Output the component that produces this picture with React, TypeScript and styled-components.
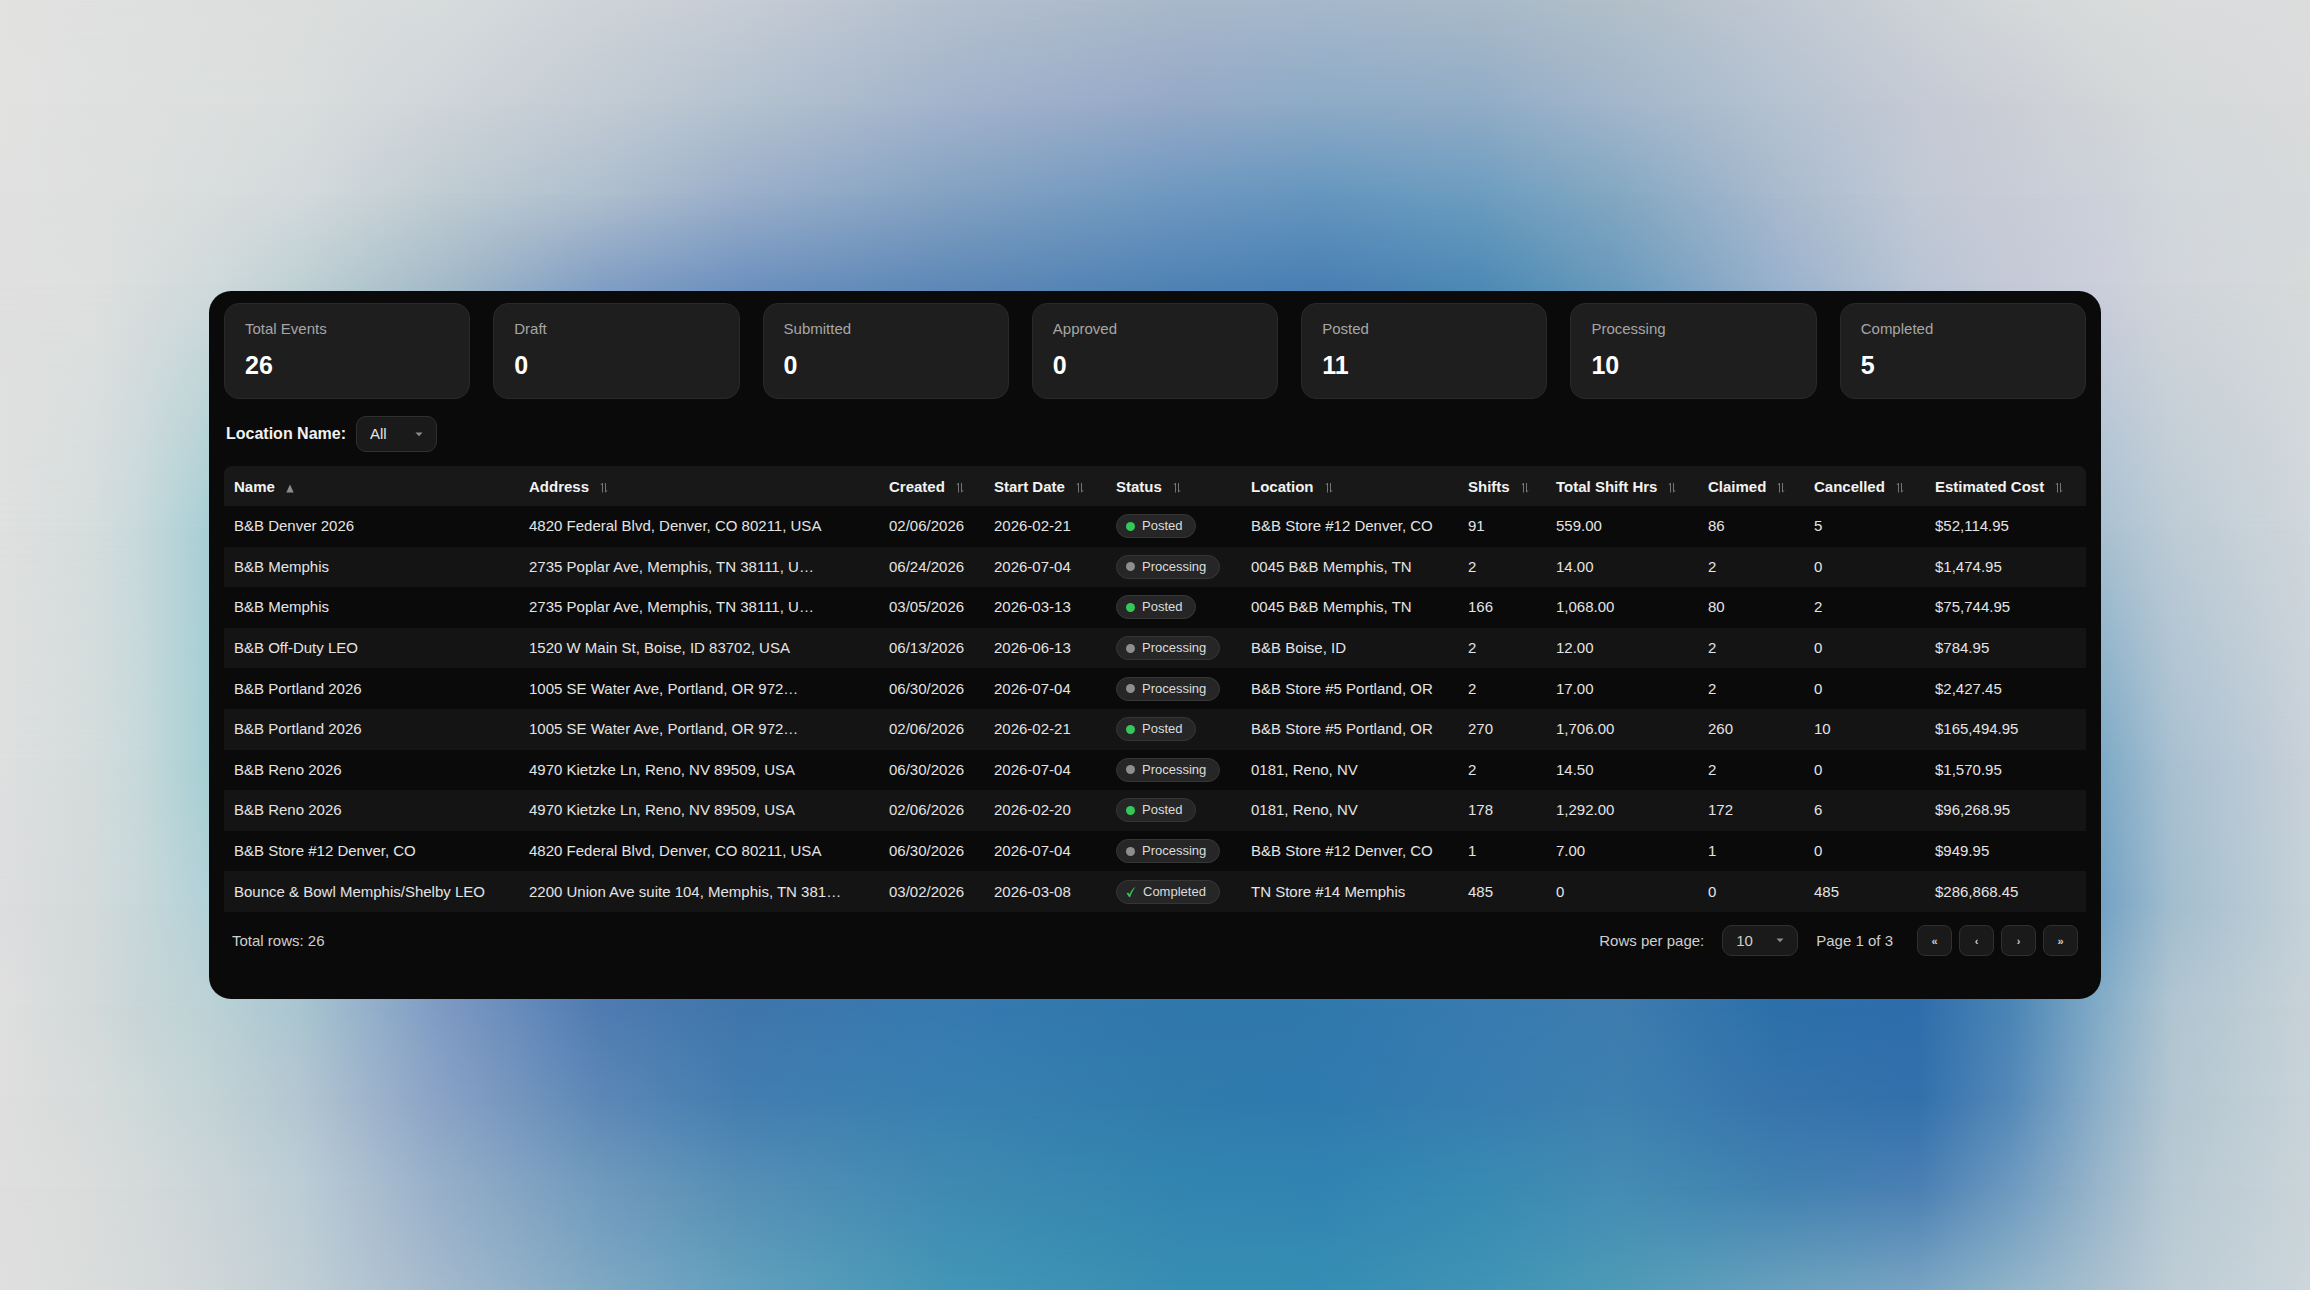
import React from "react";
import styled, { createGlobalStyle } from "styled-components";

const GlobalStyle = createGlobalStyle`
  *, *::before, *::after { box-sizing: border-box; }
  body {
    margin: 0;
    background: #d8dcdd;
    color: #e4e4e4;
    font-family: "Liberation Sans", Arial, sans-serif;
    font-size: 15px;
    line-height: 20px;
  }
  button, select { font: inherit; color: inherit; }
`;

/* Backdrop: horizontal colour bands, each fading into the next one below it. */

const STOPS = [0, 4, 6, 9, 13, 19, 26, 32, 41, 51, 57, 64, 70, 77, 83, 87, 91, 94, 100];

const BANDS: { at: number; colors: string }[] = [
  { at: 0, colors: "e2e2e1 e0e1e0 dfe1e0 dddfde dcdedd d8dcdd ced3d8 c7cdd6 b4c0cd a9b8ca a6b8cc a9bac8 b2bfc8 c0c8d3 cdd2d7 d4d8d9 d9dcdc dbdcdd dcdddd" },
  { at: 8, colors: "e2e2e1 dfe1e0 dee0df dcdfde dadddd cfd5d9 c2cbd4 b4c2cf a3b3cc 95a9c7 8eabc6 91acc6 a2b6cb b5c2d0 c4cad5 ccced6 d2d5d7 d6d9da dadbdc" },
  { at: 15, colors: "e1e1e1 dee0df dcdfde d9dddd d3dadc c0ccd3 afbfce 9bafca 84a2c2 6f98c0 6696be 6d9dc0 84a8c2 a9bace c1c9d5 c8ccd7 ccd1da d2d7db d7dadb" },
  { at: 22, colors: "e0e0e0 dee0df d9dddd d0dadb bfd0d4 a5bbc8 839fc4 6f92bf 5f89b7 5083b4 4a80b4 4d8ab4 6a9abc 99b1cc b9c4d3 c4c9d7 cccedb d1d5da d7dada" },
  { at: 41, colors: "dfe0df d5dddd c8d9dc a8cfd5 8abfcf 6aa5c4 4f8abb 437fb4 3f7cb2 3c7cb0 3b7cb0 3f7fb2 4b88b6 6a9abc 88adc4 9ab9cb a9c1d2 bdcbd5 d0d7dc" },
  { at: 59, colors: "dedfdf d4dcdc c8d9db a6cfd3 8dbfce 6b9cc3 4f80b8 437ab2 3a79b0 3578ae 3478ae 3a7ab0 3f7fb2 3f7cb0 4a82b3 6297bd 7eaac6 a8c0d1 c9d1d9" },
  { at: 70, colors: "dddddf d3dada c8d8da b2d1d8 9cc2d0 7499c4 4c78b4 3f76ae 3678b0 3078ad 3078ad 377ab0 3c7cae 3073ac 336fac 4c86b6 74a2c4 a2bdce c6d2d9" },
  { at: 78, colors: "dfdfdf d2dad9 c8d5d7 bcd2d6 a9c5d0 7f9bc4 4f7bb2 3f76ab 367ab0 3078ac 3079ad 377bb0 3e7cae 2c70aa 2f6dac 4a85b5 84adc8 b0c5d1 c8d2d8" },
  { at: 85, colors: "dedede d7dbdb ced9d9 c3d3d6 b3c6d1 8aa2c6 5c87b6 437db0 3880b0 307bab 2f7aae 377daf 3e80b0 3673ab 3170ac 5388b8 8eb0c9 b3c6d1 c8d3d9" },
  { at: 92, colors: "dedede dadcdc d4dada cbd5d8 bccdd6 97afc9 709abd 568fb5 3f8ab2 3385b0 3184b1 388ab3 448cb3 4181b0 4a7fb3 6c99bf 9ab6cb b8c9d3 cad4d9" },
  { at: 100, colors: "dedede dadcdc d6dadb cfd6d8 c1ced5 a4b9cd 7fa8c3 62a0bd 4396b5 378eb3 358eb4 3f93b4 4d9bb6 68a0bd 78a3c2 8fb3c8 a9c0cf bdccd5 ccd6db" },
];

const Backdrop = styled.div`
  position: fixed;
  inset: 0;
  z-index: -1;
`;

const Band = styled.div<{ $colors: string; $from: number; $to: number }>`
  position: absolute;
  inset: 0;
  background: linear-gradient(
    to right,
    ${(p) => p.$colors.split(" ").map((c, i) => `#${c} ${STOPS[i]}%`).join(", ")}
  );
  mask-image: linear-gradient(to bottom, ${(p) => (p.$to === 0 ? "black" : "transparent")} ${(p) => p.$from}%, black ${(p) => p.$to}%);
`;

const Page = styled.main`
  display: grid;
  align-items: center;
  min-height: 100vh;
  padding: 24px 209px;
`;

const Panel = styled.section`
  padding: 12px 15px 43px;
  border-radius: 22px;
  background: #0a0a0a;
`;

const Stats = styled.dl`
  display: grid;
  grid-template-columns: repeat(7, 1fr);
  gap: 23px;
  margin: 0;
`;

const Stat = styled.div`
  height: 96px;
  padding: 15px 20px;
  border: 1px solid #292929;
  border-radius: 15px;
  background: #1e1e1e;
`;

const StatLabel = styled.dt`
  color: #a6a6a6;
`;

const StatValue = styled.dd`
  margin: 12px 0 0;
  color: #fff;
  font-size: 25px;
  font-weight: 700;
  line-height: 28px;
`;

const Filter = styled.div`
  display: flex;
  align-items: center;
  gap: 10px;
  padding: 17px 2px 14px;
`;

const FilterLabel = styled.label`
  color: #f2f2f2;
  font-size: 16px;
  font-weight: 700;
`;

const SelectBox = styled.span<{ $width: number }>`
  display: inline-grid;
  width: ${(p) => p.$width}px;
  align-items: center;

  > * { grid-area: 1 / 1; }
  > svg { justify-self: end; margin-right: 14px; pointer-events: none; }
`;

const Select = styled.select<{ $height: number }>`
  width: 100%;
  height: ${(p) => p.$height}px;
  padding: 0 13px;
  border: 1px solid #303030;
  border-radius: 10px;
  background: #1a1a1a;
  appearance: none;
`;

const Table = styled.table`
  width: 100%;
  height: 446px;
  table-layout: fixed;
  border-collapse: separate;
  border-spacing: 0;
  border-radius: 8px 8px 0 0;
  overflow: hidden;
`;

const HeadRow = styled.tr`
  background: #181818;
`;

const Row = styled.tr`
  &:nth-child(even) { background: #141414; }
`;

const Th = styled.th`
  height: 40px;
  padding: 0 0 0 10px;
  text-align: left;
  white-space: nowrap;
`;

const SortButton = styled.button`
  display: inline-flex;
  align-items: center;
  gap: 11px;
  padding: 0;
  border: 0;
  background: none;
  color: #f2f2f2;
  font-weight: 700;
  vertical-align: middle;
`;

const Td = styled.td`
  height: 40px;
  padding: 0 0 0 10px;
  white-space: nowrap;
`;

const Pill = styled.span`
  display: inline-flex;
  align-items: center;
  gap: 7px;
  height: 24px;
  padding: 0 13px 0 9px;
  border: 1px solid #363636;
  border-radius: 12px;
  background: #262626;
  color: #dcdcdc;
  font-size: 13px;
  vertical-align: middle;
`;

const Dot = styled.span<{ $color: string }>`
  width: 9px;
  height: 9px;
  border-radius: 50%;
  background: ${(p) => p.$color};
`;

const Footer = styled.footer`
  display: flex;
  align-items: center;
  justify-content: space-between;
  padding: 13px 8px 0;
  color: #cfcfcf;
`;

const Pager = styled.div`
  display: flex;
  align-items: center;
  gap: 18px;
`;

const PageButtons = styled.nav`
  display: flex;
  gap: 7px;
  margin-left: 6px;
`;

const PageButton = styled.button`
  width: 35px;
  height: 31px;
  padding: 0;
  border: 1px solid #303030;
  border-radius: 8px;
  background: #1a1a1a;
  color: #d0d0d0;
  font-size: 11px;
  font-weight: 700;
`;

const Caret = () => (
  <svg width="8" height="5" viewBox="0 0 8 5" aria-hidden="true">
    <path d="M0.5 0.5h7L4 4.3z" fill="#8c8c8c" />
  </svg>
);

const SortBoth = () => (
  <svg width="8" height="12" viewBox="0 0 8 12" aria-hidden="true">
    <path d="M2.5 11.5V2L1 3.9M5.5 2v9.2L7 9.3" fill="none" stroke="#747474" strokeWidth="1" />
  </svg>
);

const SortUp = () => (
  <svg width="8" height="12" viewBox="0 0 8 12" aria-hidden="true">
    <path d="M4 3.5l3.7 8H0.3z" fill="#8c8c8c" />
  </svg>
);

const Check = () => (
  <svg width="10" height="12" viewBox="0 0 10 12" aria-hidden="true">
    <path d="M0.6 7.2L2.2 6.4 3.5 8.6C4.6 5.4 6.6 2.6 9.4 0.8 7.2 4 5.4 7.4 4.2 11H3z" fill="#35c759" />
  </svg>
);

const stats: [string, number][] = [
  ["Total Events", 26],
  ["Draft", 0],
  ["Submitted", 0],
  ["Approved", 0],
  ["Posted", 11],
  ["Processing", 10],
  ["Completed", 5],
];

const columns: [string, number][] = [
  ["Name", 295],
  ["Address", 360],
  ["Created", 105],
  ["Start Date", 122],
  ["Status", 135],
  ["Location", 217],
  ["Shifts", 88],
  ["Total Shift Hrs", 152],
  ["Claimed", 106],
  ["Cancelled", 121],
  ["Estimated Cost", 161],
];

const STATUS = 4;

const rows: string[][] = [
  ["B&B Denver 2026", "4820 Federal Blvd, Denver, CO 80211, USA", "02/06/2026", "2026-02-21", "Posted", "B&B Store #12 Denver, CO", "91", "559.00", "86", "5", "$52,114.95"],
  ["B&B Memphis", "2735 Poplar Ave, Memphis, TN 38111, U…", "06/24/2026", "2026-07-04", "Processing", "0045 B&B Memphis, TN", "2", "14.00", "2", "0", "$1,474.95"],
  ["B&B Memphis", "2735 Poplar Ave, Memphis, TN 38111, U…", "03/05/2026", "2026-03-13", "Posted", "0045 B&B Memphis, TN", "166", "1,068.00", "80", "2", "$75,744.95"],
  ["B&B Off-Duty LEO", "1520 W Main St, Boise, ID 83702, USA", "06/13/2026", "2026-06-13", "Processing", "B&B Boise, ID", "2", "12.00", "2", "0", "$784.95"],
  ["B&B Portland 2026", "1005 SE Water Ave, Portland, OR 972…", "06/30/2026", "2026-07-04", "Processing", "B&B Store #5 Portland, OR", "2", "17.00", "2", "0", "$2,427.45"],
  ["B&B Portland 2026", "1005 SE Water Ave, Portland, OR 972…", "02/06/2026", "2026-02-21", "Posted", "B&B Store #5 Portland, OR", "270", "1,706.00", "260", "10", "$165,494.95"],
  ["B&B Reno 2026", "4970 Kietzke Ln, Reno, NV 89509, USA", "06/30/2026", "2026-07-04", "Processing", "0181, Reno, NV", "2", "14.50", "2", "0", "$1,570.95"],
  ["B&B Reno 2026", "4970 Kietzke Ln, Reno, NV 89509, USA", "02/06/2026", "2026-02-20", "Posted", "0181, Reno, NV", "178", "1,292.00", "172", "6", "$96,268.95"],
  ["B&B Store #12 Denver, CO", "4820 Federal Blvd, Denver, CO 80211, USA", "06/30/2026", "2026-07-04", "Processing", "B&B Store #12 Denver, CO", "1", "7.00", "1", "0", "$949.95"],
  ["Bounce & Bowl Memphis/Shelby LEO", "2200 Union Ave suite 104, Memphis, TN 381…", "03/02/2026", "2026-03-08", "Completed", "TN Store #14 Memphis", "485", "0", "0", "485", "$286,868.45"],
];

const StatusPill = ({ status }: { status: string }) => (
  <Pill>
    {status === "Completed" ? <Check /> : <Dot $color={status === "Posted" ? "#35c759" : "#8e8e8e"} />}
    {status}
  </Pill>
);

export default function App() {
  return (
    <>
      <GlobalStyle />
      <Backdrop aria-hidden="true">
        {BANDS.map((band, i) => (
          <Band key={band.at} $colors={band.colors} $from={i ? BANDS[i - 1].at : 0} $to={band.at} />
        ))}
      </Backdrop>
      <Page>
        <Panel>
          <Stats>
            {stats.map(([label, value]) => (
              <Stat key={label}>
                <StatLabel>{label}</StatLabel>
                <StatValue>{value}</StatValue>
              </Stat>
            ))}
          </Stats>
          <Filter>
            <FilterLabel htmlFor="location">Location Name:</FilterLabel>
            <SelectBox $width={81}>
              <Select id="location" $height={36}>
                <option>All</option>
              </Select>
              <Caret />
            </SelectBox>
          </Filter>
          <Table>
            <colgroup>
              {columns.map(([name, width]) => (
                <col key={name} width={width} />
              ))}
            </colgroup>
            <thead>
              <HeadRow>
                {columns.map(([name], i) => (
                  <Th key={name} scope="col">
                    <SortButton type="button">
                      {name}
                      {i === 0 ? <SortUp /> : <SortBoth />}
                    </SortButton>
                  </Th>
                ))}
              </HeadRow>
            </thead>
            <tbody>
              {rows.map((row, r) => (
                <Row key={r}>
                  {row.map((cell, c) => (
                    <Td key={c}>{c === STATUS ? <StatusPill status={cell} /> : cell}</Td>
                  ))}
                </Row>
              ))}
            </tbody>
          </Table>
          <Footer>
            <span>Total rows: 26</span>
            <Pager>
              <label htmlFor="page-size">Rows per page:</label>
              <SelectBox $width={76}>
                <Select id="page-size" $height={31}>
                  <option>10</option>
                </Select>
                <Caret />
              </SelectBox>
              <span>Page 1 of 3</span>
              <PageButtons aria-label="Pagination">
                <PageButton type="button" aria-label="First page">«</PageButton>
                <PageButton type="button" aria-label="Previous page">‹</PageButton>
                <PageButton type="button" aria-label="Next page">›</PageButton>
                <PageButton type="button" aria-label="Last page">»</PageButton>
              </PageButtons>
            </Pager>
          </Footer>
        </Panel>
      </Page>
    </>
  );
}
